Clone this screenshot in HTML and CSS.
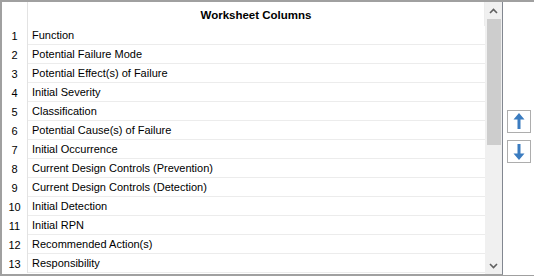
FILE: index.html
```html
<!DOCTYPE html>
<html lang="en">
<head>
    <meta charset="UTF-8">
    <title>Worksheet Columns</title>
    <link rel="stylesheet" href="styles.css">
</head>
<body>

<div class="frame">
    <div class="grid">
        <div class="table">
            <div class="row header">
                <div class="num"></div>
                <div class="cell">Worksheet Columns</div>
            </div>
            <div class="row"><div class="num">1</div><div class="cell">Function</div></div>
            <div class="row"><div class="num">2</div><div class="cell">Potential Failure Mode</div></div>
            <div class="row"><div class="num">3</div><div class="cell">Potential Effect(s) of Failure</div></div>
            <div class="row"><div class="num">4</div><div class="cell">Initial Severity</div></div>
            <div class="row"><div class="num">5</div><div class="cell">Classification</div></div>
            <div class="row"><div class="num">6</div><div class="cell">Potential Cause(s) of Failure</div></div>
            <div class="row"><div class="num">7</div><div class="cell">Initial Occurrence</div></div>
            <div class="row"><div class="num">8</div><div class="cell">Current Design Controls (Prevention)</div></div>
            <div class="row"><div class="num">9</div><div class="cell">Current Design Controls (Detection)</div></div>
            <div class="row"><div class="num">10</div><div class="cell">Initial Detection</div></div>
            <div class="row"><div class="num">11</div><div class="cell">Initial RPN</div></div>
            <div class="row"><div class="num">12</div><div class="cell">Recommended Action(s)</div></div>
            <div class="row"><div class="num">13</div><div class="cell">Responsibility</div></div>
        </div>

        <div class="scrollbar">
            <div class="scroll-btn">
                <svg width="9" height="6" viewBox="0 0 9 6"><path d="M1 5 L4.5 1.5 L8 5" fill="none" stroke="#606060" stroke-width="1.6"/></svg>
            </div>
            <div class="thumb"></div>
            <div class="track"></div>
            <div class="scroll-btn">
                <svg width="9" height="6" viewBox="0 0 9 6"><path d="M1 1 L4.5 4.5 L8 1" fill="none" stroke="#606060" stroke-width="1.6"/></svg>
            </div>
        </div>
    </div>

    <div class="side">
        <button class="move-btn" title="Move up">
            <svg width="22" height="21" viewBox="0 0 22 21"><polygon points="11,2 5.5,8.5 9.5,8.5 9.5,18 12.5,18 12.5,8.5 16.5,8.5" fill="#3b7cc0"/></svg>
        </button>
        <button class="move-btn" title="Move down">
            <svg width="22" height="21" viewBox="0 0 22 21"><polygon points="11,19 5.5,12.5 9.5,12.5 9.5,3 12.5,3 12.5,12.5 16.5,12.5" fill="#3b7cc0"/></svg>
        </button>
    </div>
</div>

</body>
</html>
```

FILE: styles.css
```css
* {
    box-sizing: border-box;
    margin: 0;
    padding: 0;
}

body {
    font-family: "Liberation Sans", Arial, sans-serif;
    font-size: 11px;
    color: #000;
    background-color: #fff;
    width: 534px;
    height: 277px;
    overflow: hidden;
}

.frame {
    display: flex;
    height: 276px;
    border-top: 2px solid #a0a0a0;
    border-left: 2px solid #a0a0a0;
    border-bottom: 1px solid #a0a0a0;
}

.grid {
    display: flex;
    width: 501px;
    border-right: 1px solid #828790;
    border-bottom: 1px solid #a0a0a0;
    overflow: hidden;
}

.table {
    flex: 1;
    overflow: hidden;
}

.row {
    display: flex;
    height: 19px;
}

.num {
    width: 26px;
    flex-shrink: 0;
    border-right: 1px solid #e3e3e3;
    text-align: center;
    padding-top: 1px;
    line-height: 18px;
}

.cell {
    flex: 1;
    padding-left: 4px;
    padding-top: 1px;
    line-height: 17px;
    border-bottom: 1px solid #ececec;
    white-space: nowrap;
}

.header {
    height: 24px;
}

.header .cell {
    border-bottom: none;
    border-right: 1px solid #ececec;
    text-align: center;
    font-weight: bold;
    font-size: 11.5px;
    line-height: 25px;
    padding-left: 0;
}

.scrollbar {
    width: 17px;
    background-color: #f0f0f0;
    display: flex;
    flex-direction: column;
    align-items: center;
}

.scroll-btn {
    height: 17px;
    width: 100%;
    display: flex;
    align-items: center;
    justify-content: center;
}

.thumb {
    width: 14px;
    height: 126px;
    background-color: #cdcdcd;
}

.track {
    flex: 1;
}

.side {
    flex: 1;
    display: flex;
    flex-direction: column;
    align-items: center;
    justify-content: center;
    gap: 7px;
    padding-bottom: 5px;
}

.move-btn {
    width: 24px;
    height: 23px;
    border: 1px solid #adadad;
    background-color: #fff;
    display: flex;
    align-items: center;
    justify-content: center;
    cursor: pointer;
}
```
